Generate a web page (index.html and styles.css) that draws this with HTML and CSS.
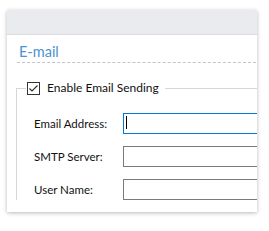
FILE: index.html
```html
<!DOCTYPE html>
<html>
<head>
<meta charset="utf-8">
<link rel="stylesheet" href="styles.css">
</head>
<body>
<div class="window">
  <div class="titlebar"></div>
  <div class="content">
    <div class="section-title">E-mail</div>
    <fieldset class="group">
      <legend class="group-legend">
        <span class="checkbox">
          <svg width="11" height="11" viewBox="0 0 11 11"><path d="M1.5 5.5 L4 8 L9.5 2.5" fill="none" stroke="#333" stroke-width="1.2"/></svg>
        </span>
        <span class="legend-text">Enable Email Sending</span>
      </legend>
      <div class="form">
        <div class="label">Email Address:</div>
        <div class="field focused"><span class="caret"></span></div>
        <div class="label">SMTP Server:</div>
        <div class="field"></div>
        <div class="label">User Name:</div>
        <div class="field"></div>
      </div>
    </fieldset>
  </div>
</div>
</body>
</html>
```

FILE: styles.css
```css
html, body {
  margin: 0;
  padding: 0;
  background: #ffffff;
}
body {
  width: 269px;
  height: 231px;
  overflow: hidden;
  font-family: Lato, "Noto Sans", sans-serif;
}
.window {
  margin: 10px 0 0 7px;
  width: 250px;
  height: 202px;
  background: #ffffff;
  box-shadow: 0 1px 4px rgba(0, 0, 0, 0.28);
  overflow: hidden;
}
.titlebar {
  height: 24px;
  background: #e9ebef;
  border-bottom: 1px solid #dadde2;
}
.content {
  padding: 8px 0 0 10px;
}
.section-title {
  font-size: 14.5px;
  line-height: 18px;
  color: #4b92d2;
  padding: 0 0 0 2px;
  border-bottom: 1px dashed #c4c4c4;
  margin-right: 1px;
  height: 19px;
}
.group {
  margin: 17px 0 0 -1px;
  padding: 0;
  border: none;
  border-top: 1px solid #d6d6d6;
  border-left: 1px solid #d6d6d6;
  min-width: 0;
}
.group-legend {
  margin-left: 9px;
  padding: 0 6px 0 1px;
  display: flex;
  align-items: center;
  height: 16px;
}
.checkbox {
  width: 11px;
  height: 11px;
  border: 1px solid #333333;
  display: flex;
  align-items: center;
  justify-content: center;
  margin-right: 7px;
  background: #fff;
}
.checkbox svg {
  display: block;
}
.legend-text {
  font-size: 12px;
  color: #111111;
  line-height: 16px;
}
.form {
  display: grid;
  grid-template-columns: 89px 150px;
  grid-auto-rows: 21px;
  row-gap: 12px;
  padding: 17px 0 0 17px;
  align-items: center;
}
.label {
  font-size: 11.5px;
  color: #111111;
}
.field {
  height: 21px;
  box-sizing: border-box;
  border: 1px solid #7a7a7a;
  background: #fff;
  position: relative;
}
.field.focused {
  border-color: #0078d7;
}
.caret {
  position: absolute;
  left: 2px;
  top: 2px;
  width: 1px;
  height: 13px;
  background: #000;
}
```
